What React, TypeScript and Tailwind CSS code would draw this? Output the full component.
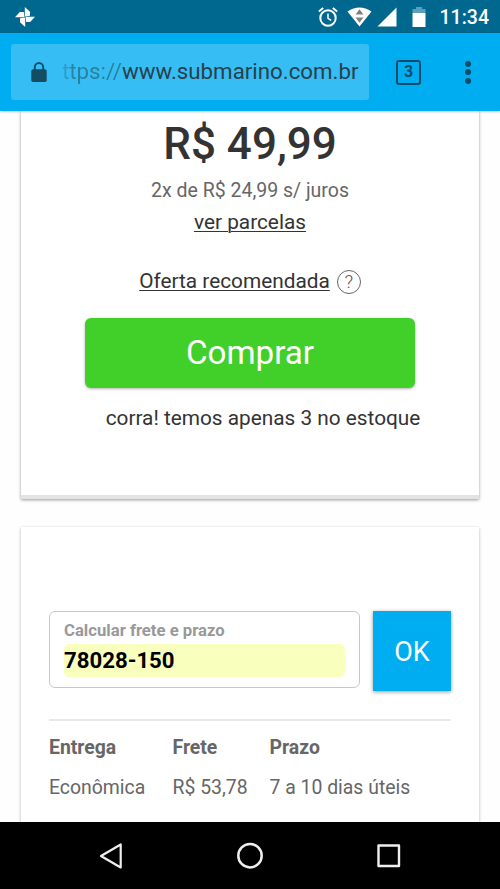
import type { ReactNode } from 'react'

interface ShippingOption {
  entrega: string
  frete: string
  prazo: string
}

const shippingOptions: ShippingOption[] = [
  { entrega: 'Econômica', frete: 'R$ 53,78', prazo: '7 a 10 dias úteis' },
]

function StatusBar() {
  return (
    <div className="flex h-[33px] shrink-0 items-center justify-between bg-[#00678f] pl-[15px] pr-[11px] text-white">
      <svg width="20" height="20" viewBox="0 0 20 20" fill="currentColor">
        <path d="M9.8 0 L15 4.8 V8.8 L9.8 9.4 Z" />
        <path d="M20 9.8 L15.2 15 H11.2 L10.6 9.8 Z" />
        <path d="M10.2 20 L5 15.2 V11.2 L10.2 10.6 Z" />
        <path d="M0 10.2 L4.8 5 H8.8 L9.4 10.2 Z" />
      </svg>
      <div className="flex items-center">
        {/* Alarme */}
        <svg width="20" height="20" viewBox="0 0 20 20" fill="none" stroke="currentColor">
          <circle cx="10" cy="11" r="7.7" strokeWidth="2" />
          <path d="M10 6.6 V11.4 L13.2 13.4" strokeWidth="1.5" />
          <path d="M0.8 4.6 L5.2 1 M19.2 4.6 L14.8 1" strokeWidth="1.9" />
        </svg>
        {/* Wi-Fi */}
        <svg className="ml-[9px]" width="25" height="20" viewBox="0 0 25 20">
          <path d="M0.5 4.5 Q12.5 -3.5 24.5 4.5 L12.5 19.5 Z" fill="#fff" />
          <path d="M12.5 2.2 L16.4 7.6 H8.6 Z M8.6 10.4 H16.4 L12.5 15.8 Z" fill="#808080" />
        </svg>
        <svg className="ml-[5px]" width="20" height="20" viewBox="0 0 20 20" fill="currentColor">
          <path d="M19.5 0.5 V19.5 H0.5 Z" />
        </svg>
        {/* Bateria */}
        <svg className="ml-[15px]" width="14" height="20" viewBox="0 0 14 20">
          <path d="M4 0 H10 V2 H13.5 V6 H0.5 V2 H4 Z" fill="#5c9fba" />
          <path d="M0.5 6 H13.5 V20 H0.5 Z" fill="#fff" />
        </svg>
        <span className="ml-[14px] pt-px text-[19.5px] font-medium leading-[33px]">11:34</span>
      </div>
    </div>
  )
}

function BrowserBar() {
  return (
    <div className="relative z-10 flex h-[78px] shrink-0 items-center bg-[#00adf0] pl-[11px] shadow-[0_1px_2px_rgba(0,0,0,0.25)]">
      <div className="mt-[-1px] flex h-[56px] w-[358px] items-center rounded-[3px] bg-[#36bdf3] pl-5">
        <svg width="16" height="20" viewBox="0 0 16 20">
          <path d="M3.8 8 V5.2 A4.2 4.2 0 0 1 12.2 5.2 V8" fill="none" stroke="#124d63" strokeWidth="1.9" />
          <rect x="0.3" y="7.2" width="15.4" height="12.8" rx="1.8" fill="#124d63" />
        </svg>
        <span className="ml-[15px] mt-px whitespace-nowrap text-[22.3px] text-[#27414c]">
          <span className="bg-linear-to-r from-[#2c93bd]/50 via-[#28809f] via-20% to-[#28809f] bg-clip-text text-transparent">
            ttps://
          </span>
          www.submarino.com.br
        </span>
      </div>
      <div className="ml-[27px] flex h-[25px] w-[25px] items-center justify-center rounded-[3px] border-[2.5px] border-[#0b4d68] text-[16px] font-bold text-[#0b4d68]">
        3
      </div>
      <div className="ml-[44px] flex flex-col gap-[2.5px]">
        <span className="h-[6px] w-[6px] rounded-full bg-[#0b4d68]" />
        <span className="h-[6px] w-[6px] rounded-full bg-[#0b4d68]" />
        <span className="h-[6px] w-[6px] rounded-full bg-[#0b4d68]" />
      </div>
    </div>
  )
}

function Underlined({ children }: { children: ReactNode }) {
  return (
    <a href="#" className="underline decoration-1 underline-offset-2">
      {children}
    </a>
  )
}

function OfferCard() {
  return (
    <section className="mx-auto flex h-[388px] w-[458px] shrink-0 flex-col items-center border-b-4 border-[#e3e3e3] bg-white text-[#333] shadow-[0_1px_3px_rgba(0,0,0,0.4)]">
      <p className="text-[44px] font-medium leading-[66px]">R$ 49,99</p>
      <p className="pt-px text-[19.5px] leading-[26px] text-[#666]">2x de R$ 24,99 s/ juros</p>
      <p className="text-[20.8px] leading-[36px]">
        <Underlined>ver parcelas</Underlined>
      </p>
      <div className="mt-[30px] flex h-6 items-center gap-[7px] text-[20.8px]">
        <Underlined>Oferta recomendada</Underlined>
        <span className="flex h-6 w-6 items-center justify-center rounded-full border-[1.5px] border-[#666] text-[19px] font-light text-[#555]">
          ?
        </span>
      </div>
      <button className="mt-6 h-[70px] w-[330px] rounded-[6px] bg-[#41cf2a] text-[33.2px] text-white shadow-[0_1px_3px_rgba(0,0,0,0.3)]">
        Comprar
      </button>
      <p className="ml-[26px] mt-[17px] text-[20.8px] leading-[26px]">corra! temos apenas 3 no estoque</p>
    </section>
  )
}

function ShippingCard() {
  return (
    <section className="mx-auto mt-7 w-[458px] flex-1 bg-white px-7 pt-[84px] shadow-[0_1px_3px_rgba(0,0,0,0.3)]">
      <div className="flex items-start justify-between">
        <div className="h-[77px] w-[311px] rounded-[6px] border border-[#c8c8c8] px-[14px] pt-[9px]">
          <p className="text-[16.7px] font-bold leading-5 text-[#999]">Calcular frete e prazo</p>
          <div className="mt-[3px] h-[33px] rounded-[5px] bg-[#f9ffbd] text-[22.2px] font-bold leading-[33px] text-black">
            78028-150
          </div>
        </div>
        <button className="h-[80px] w-[78px] bg-[#00adf0] pt-[2px] text-[27px] text-white shadow-[0_1px_4px_rgba(0,0,0,0.4)]">
          OK
        </button>
      </div>
      <table className="mt-7 w-full table-fixed border-t-2 border-[#e9e9e9] text-left text-[19.4px] text-[#666]">
        <thead>
          <tr className="h-[53px]">
            <th className="w-[123.5px] pt-[2px] font-bold">Entrega</th>
            <th className="w-[97px] pt-[2px] font-bold">Frete</th>
            <th className="pt-[2px] font-bold">Prazo</th>
          </tr>
        </thead>
        <tbody>
          {shippingOptions.map(({ entrega, frete, prazo }) => (
            <tr key={entrega} className="h-7">
              <td>{entrega}</td>
              <td>{frete}</td>
              <td>{prazo}</td>
            </tr>
          ))}
        </tbody>
      </table>
    </section>
  )
}

function NavigationBar() {
  return (
    <div className="relative z-10 flex h-[67px] shrink-0 items-center justify-between bg-black px-[98px]">
      <svg width="28" height="28" viewBox="0 0 28 28" fill="none" stroke="#eee" strokeWidth="2.2" strokeLinejoin="round">
        <path d="M22.7 2.5 V25.5 L3 14 Z" />
      </svg>
      <svg width="28" height="28" viewBox="0 0 28 28" fill="none" stroke="#eee" strokeWidth="2.5">
        <circle cx="14" cy="13.7" r="11.7" />
      </svg>
      <svg width="28" height="28" viewBox="0 0 28 28" fill="none" stroke="#eee" strokeWidth="2.4" strokeLinejoin="round">
        <rect x="4.5" y="3.5" width="20.5" height="20.5" />
      </svg>
    </div>
  )
}

export default function App() {
  return (
    <div className="flex h-[889px] w-[500px] flex-col overflow-hidden bg-[#fefefe] font-[Roboto,sans-serif]">
      <StatusBar />
      <BrowserBar />
      <main className="flex min-h-0 flex-1 flex-col">
        <OfferCard />
        <ShippingCard />
      </main>
      <NavigationBar />
    </div>
  )
}
